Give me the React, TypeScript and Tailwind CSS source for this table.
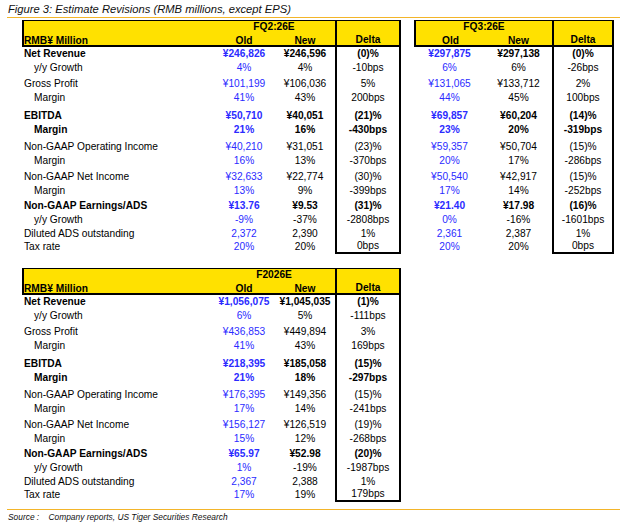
import clsx from 'clsx';

type Line = {
  label: string;
  indent?: boolean;
  bold?: boolean;
  h: string;
  gap?: string;
};

type Vals = [string, string, string][];

const lines: Line[] = [
  { label: 'Net Revenue', bold: true, h: 'h-[14px]' },
  { label: 'y/y Growth', indent: true, h: 'h-[14px]' },
  { label: 'Gross Profit', h: 'h-[14px]', gap: 'h-[2px]' },
  { label: 'Margin', indent: true, h: 'h-[13px]' },
  { label: 'EBITDA', bold: true, h: 'h-[14px]', gap: 'h-[5px]' },
  { label: 'Margin', indent: true, bold: true, h: 'h-[13px]' },
  { label: 'Non-GAAP Operating Income', h: 'h-[14px]', gap: 'h-[4px]' },
  { label: 'Margin', indent: true, h: 'h-[13px]' },
  { label: 'Non-GAAP Net Income', h: 'h-[14px]', gap: 'h-[3px]' },
  { label: 'Margin', indent: true, h: 'h-[13px]' },
  { label: 'Non-GAAP Earnings/ADS', bold: true, h: 'h-[14px]', gap: 'h-[2px]' },
  { label: 'y/y Growth', indent: true, h: 'h-[14px]' },
  { label: 'Diluted ADS outstanding', h: 'h-[13px]' },
  { label: 'Tax rate', h: 'h-[13px]' },
];

const fq2: Vals = [
  ['¥246,826', '¥246,596', '(0)%'],
  ['4%', '4%', '-10bps'],
  ['¥101,199', '¥106,036', '5%'],
  ['41%', '43%', '200bps'],
  ['¥50,710', '¥40,051', '(21)%'],
  ['21%', '16%', '-430bps'],
  ['¥40,210', '¥31,051', '(23)%'],
  ['16%', '13%', '-370bps'],
  ['¥32,633', '¥22,774', '(30)%'],
  ['13%', '9%', '-399bps'],
  ['¥13.76', '¥9.53', '(31)%'],
  ['-9%', '-37%', '-2808bps'],
  ['2,372', '2,390', '1%'],
  ['20%', '20%', '0bps'],
];

const fq3: Vals = [
  ['¥297,875', '¥297,138', '(0)%'],
  ['6%', '6%', '-26bps'],
  ['¥131,065', '¥133,712', '2%'],
  ['44%', '45%', '100bps'],
  ['¥69,857', '¥60,204', '(14)%'],
  ['23%', '20%', '-319bps'],
  ['¥59,357', '¥50,704', '(15)%'],
  ['20%', '17%', '-286bps'],
  ['¥50,540', '¥42,917', '(15)%'],
  ['17%', '14%', '-252bps'],
  ['¥21.40', '¥17.98', '(16)%'],
  ['0%', '-16%', '-1601bps'],
  ['2,361', '2,387', '1%'],
  ['20%', '20%', '0bps'],
];

const fy26: Vals = [
  ['¥1,056,075', '¥1,045,035', '(1)%'],
  ['6%', '5%', '-111bps'],
  ['¥436,853', '¥449,894', '3%'],
  ['41%', '43%', '169bps'],
  ['¥218,395', '¥185,058', '(15)%'],
  ['21%', '18%', '-297bps'],
  ['¥176,395', '¥149,356', '(15)%'],
  ['17%', '14%', '-241bps'],
  ['¥156,127', '¥126,519', '(19)%'],
  ['15%', '12%', '-268bps'],
  ['¥65.97', '¥52.98', '(20)%'],
  ['1%', '-19%', '-1987bps'],
  ['2,367', '2,388', '1%'],
  ['17%', '19%', '179bps'],
];

interface TableProps {
  period: string;
  vals: Vals;
  withLabels?: boolean;
}

function EstimateTable({ period, vals, withLabels }: TableProps) {
  const headCols = withLabels ? 'grid-cols-[189px_62px_60px_66px]' : 'grid-cols-[69px_67px_62px]';
  const bodyCols = withLabels ? 'grid-cols-[191px_62px_60px_66px]' : 'grid-cols-[71px_67px_62px]';

  return (
    <div className={clsx('text-[10.2px] leading-[12px] text-black', withLabels ? 'w-[379px]' : 'w-[200px]')}>
      <div className={clsx('grid h-[27px] grid-rows-[11px_13px] border-t border-l-2 border-b-2 border-black bg-[#ffe100] font-bold', headCols)}>
        {withLabels && (
          <div className="col-start-1 row-start-2 self-end leading-[9px] whitespace-nowrap">RMB¥ Million</div>
        )}
        <div className={clsx('row-start-1 col-span-2 pt-[1px] text-center leading-[10px]', withLabels ? 'col-start-2' : 'col-start-1')}>
          {period}
        </div>
        <div className={clsx('row-start-2 self-end text-center leading-[9px]', withLabels ? 'col-start-2' : 'col-start-1')}>Old</div>
        <div className={clsx('row-start-2 self-end text-center leading-[9px]', withLabels ? 'col-start-3' : 'col-start-2')}>New</div>
        <div
          className={clsx(
            'row-start-1 row-span-2 flex items-end justify-center border-x-2 border-black pb-[1px] leading-[9px]',
            withLabels ? 'col-start-4' : 'col-start-3'
          )}
        >
          Delta
        </div>
      </div>

      {lines.map((line, i) => {
        const [oldV, newV, delta] = vals[i];
        const last = i === lines.length - 1;
        return (
          <div key={i}>
            {line.gap && (
              <div className={clsx('grid', bodyCols, line.gap)}>
                {withLabels && <div />}
                <div />
                <div />
                <div className="border-x-2 border-black" />
              </div>
            )}
            <div className={clsx('grid', bodyCols, line.h, line.bold && 'font-bold')}>
              {withLabels && (
                <div className={clsx('flex items-center whitespace-nowrap', line.indent ? 'pl-[12px]' : 'pl-[2px]')}>
                  {line.label}
                </div>
              )}
              <div className="flex items-center justify-center text-[#2b2bff]">{oldV}</div>
              <div className="flex items-center justify-center">{newV}</div>
              <div className={clsx('flex items-center justify-center border-x-2 border-black', last && 'border-b-2')}>
                {delta}
              </div>
            </div>
          </div>
        );
      })}
    </div>
  );
}

export default function App() {
  return (
    <div className="w-[620px] h-[528px] overflow-hidden bg-white font-['Liberation_Sans',Arial,sans-serif] text-black">
      <div className="h-[17px] pl-[8px] pt-[3px] text-[11.2px] italic leading-[13px] text-[#111]">
        Figure 3: Estimate Revisions (RMB millions, except EPS)
      </div>
      <div className="ml-[7px] h-px bg-[#f3b52a]" />

      <div className="mt-[2px] flex gap-[13px] pl-[22px]">
        <EstimateTable period="FQ2:26E" vals={fq2} withLabels />
        <EstimateTable period="FQ3:26E" vals={fq3} />
      </div>

      <div className="mt-[15px] pl-[22px]">
        <EstimateTable period="F2026E" vals={fy26} withLabels />
      </div>

      <div className="mt-[8px] ml-[7px] h-px bg-[#f3b52a]" />
      <div className="pl-[8px] pt-[2px] text-[8.4px] italic leading-[10px] whitespace-pre text-[#111]">
        {'Source :    Company reports, US Tiger Securities Research'}
      </div>
    </div>
  );
}
